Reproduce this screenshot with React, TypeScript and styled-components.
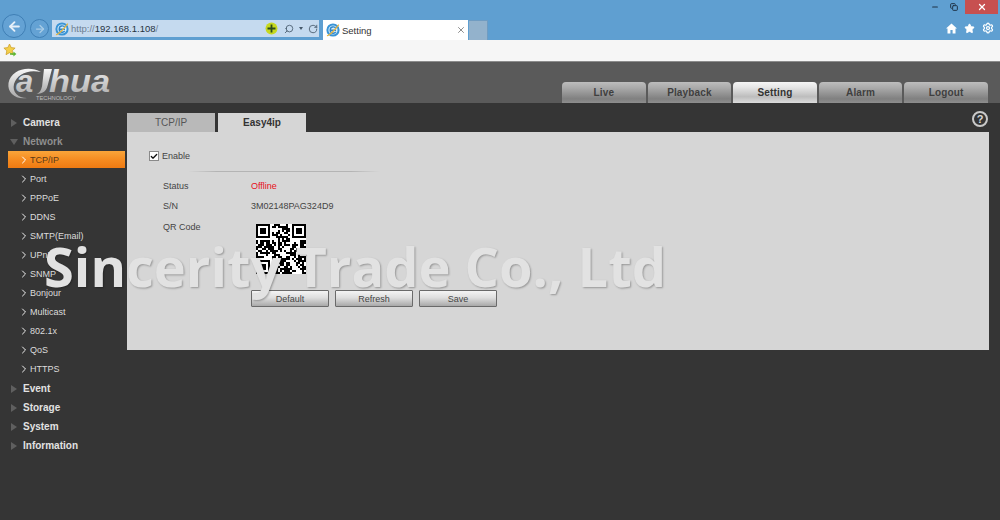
import React, { useMemo } from "react";
import styled, { createGlobalStyle } from "styled-components";
import { ArrowLeft, ArrowRight, Minus, RotateCw, Search, Settings, Star, X, ChevronRight, Check, Copy } from "lucide-react";

const Global = createGlobalStyle`
  html, body { margin: 0; padding: 0; background: #353535; }
  body { font-family: "Liberation Sans", Arial, sans-serif; }
  * { box-sizing: border-box; }
`;

const Page = styled.div`
  position: relative;
  width: 1000px;
  height: 520px;
  overflow: hidden;
  display: flex;
  flex-direction: column;
  background: #353535;
`;

/* browser chrome */
const Chrome = styled.div`
  height: 40px;
  background: #5f9fd1;
  display: flex;
  flex-direction: column;
`;
const Caption = styled.div`
  height: 14px;
  display: flex;
  justify-content: flex-end;
  align-items: center;
  padding-right: 2px;
  color: #1f3347;
`;
const CaptionBtn = styled.div<{ $w: number }>`
  width: ${(p) => p.$w}px;
  height: 14px;
  display: flex;
  align-items: center;
  justify-content: center;
`;
const CloseBtn = styled.div`
  width: 33px;
  height: 14px;
  background: #c75050;
  color: #fff;
  display: flex;
  align-items: center;
  justify-content: center;
`;
const Toolbar = styled.div`
  flex: 1;
  display: flex;
  align-items: flex-end;
  padding-left: 2px;
`;
const NavCircle = styled.div<{ $size: number; $dim?: boolean }>`
  width: ${(p) => p.$size}px;
  height: ${(p) => p.$size}px;
  border-radius: 50%;
  border: 1px solid #3f7fb5;
  background: #64a2d4;
  color: ${(p) => (p.$dim ? "#a9cbe6" : "#e6f0f9")};
  display: flex;
  align-items: center;
  justify-content: center;
  flex: none;
`;
const NavGroup = styled.div`
  display: flex;
  align-items: flex-end;
  gap: 4px;
  height: 24px;
  margin-bottom: 2px;
  width: 50px;
  flex: none;
`;
const Address = styled.div`
  width: 267px;
  height: 17px;
  margin-bottom: 3px;
  background: #c5daef;
  display: flex;
  align-items: center;
  padding: 0 1px 0 3px;
  color: #44586a;
  flex: none;
`;
const Url = styled.span`
  font-size: 9.5px;
  margin-left: 2px;
  color: #6f8091;
  flex: 1;
  b { font-weight: 400; color: #27333f; }
`;
const AddrIcons = styled.div`
  display: flex;
  align-items: center;
  color: #45586a;
`;
const SearchGlyph = styled(Search)`
  transform: scaleX(-1);
  margin-left: 6px;
`;
const Caret = styled.span`
  width: 0;
  height: 0;
  margin-left: 5px;
  border-left: 2.5px solid transparent;
  border-right: 2.5px solid transparent;
  border-top: 3px solid #45586a;
`;
const ReloadGlyph = styled(RotateCw)`
  margin-left: 5px;
`;
const PageTab = styled.div`
  width: 145px;
  height: 20px;
  margin-left: 4px;
  background: #fff;
  display: flex;
  align-items: center;
  padding: 0 2px 0 3px;
  flex: none;
`;
const PageTabTitle = styled.span`
  flex: 1;
  font-size: 9.5px;
  margin-left: 2px;
  color: #333;
`;
const NewTab = styled.div`
  width: 19px;
  height: 20px;
  margin-left: 1px;
  background: #93b2cc;
  border-top: 1px solid #6f9cc2;
  border-right: 1px solid #6f9cc2;
  flex: none;
`;
const RightIcons = styled.div`
  margin-left: auto;
  height: 24px;
  display: flex;
  align-items: center;
  gap: 7px;
  padding-right: 6px;
  color: #fff;
`;
const Favs = styled.div`
  height: 22px;
  background: #f6f6f6;
  display: flex;
  align-items: center;
  padding: 0 0 1px 3px;
  border-bottom: 1px solid #8c8c8c;
`;

/* device header */
const Header = styled.div`
  height: 41px;
  background: #5a5a5a;
  display: flex;
  align-items: flex-end;
  justify-content: space-between;
  padding: 0 12px 0 8px;
`;
const LogoBox = styled.div`
  width: 104px;
  height: 36px;
  align-self: flex-start;
  margin-top: 4px;
`;
const LogoSvg = styled.svg`
  display: block;
  overflow: visible;
`;
const MainTabs = styled.div`
  display: flex;
  gap: 2px;
`;
const MainTab = styled.div<{ $active?: boolean }>`
  width: 83.6px;
  height: 21px;
  border-radius: 4px 4px 0 0;
  display: flex;
  align-items: center;
  justify-content: center;
  font-size: 10px;
  font-weight: 700;
  letter-spacing: 0.15px;
  color: ${(p) => (p.$active ? "#333" : "#3f3f3f")};
  background: ${(p) =>
    p.$active
      ? "linear-gradient(#f6f6f6, #e6e6e6 25%, #bdbdbd 70%, #dcdcdc)"
      : "linear-gradient(#bdbdbd, #a8a8a8 30%, #808080 80%, #8e8e8e)"};
`;

/* body */
const Body = styled.div`
  flex: 1;
  display: flex;
  padding: 10px 11px 0 0;
`;
const Sidebar = styled.nav`
  width: 127px;
  flex: none;
  padding-right: 2px;
`;
const Group = styled.div<{ $dim?: boolean }>`
  height: 19px;
  display: flex;
  align-items: center;
  padding-left: 11px;
  gap: 6px;
  font-size: 10px;
  font-weight: 700;
  color: ${(p) => (p.$dim ? "#8f8f8f" : "#e2e2e2")};
`;
const Tri = styled.span<{ $open?: boolean }>`
  width: 0;
  height: 0;
  flex: none;
  ${(p) =>
    p.$open
      ? `border-left: 4px solid transparent; border-right: 4px solid transparent; border-top: 6px solid #5f5f5f; margin-left: -1px; margin-right: -1px;`
      : `border-top: 4px solid transparent; border-bottom: 4px solid transparent; border-left: 6px solid #5f5f5f;`}
`;
const Item = styled.div<{ $active?: boolean }>`
  height: ${(p) => (p.$active ? 17 : 19)}px;
  margin-bottom: ${(p) => (p.$active ? 2 : 0)}px;
  padding-bottom: ${(p) => (p.$active ? 0 : 1)}px;
  margin-left: 8px;
  width: 117px;
  display: flex;
  align-items: center;
  padding-left: 10px;
  font-size: 9px;
  color: ${(p) => (p.$active ? "#5a3a18" : "#dcdcdc")};
  background: ${(p) => (p.$active ? "linear-gradient(#f9a53a, #f58a1f 55%, #ee7a12)" : "none")};
  svg { color: ${(p) => (p.$active ? "#fff" : "#f0f0f0")}; flex: none; }
`;

const Main = styled.main`
  flex: 1;
  display: flex;
  flex-direction: column;
`;
const SubBar = styled.div`
  height: 19px;
  display: flex;
  gap: 3px;
`;
const SubTab = styled.div<{ $active?: boolean }>`
  width: 88px;
  height: 19px;
  display: flex;
  align-items: center;
  justify-content: center;
  font-size: 10px;
  font-weight: ${(p) => (p.$active ? 700 : 400)};
  color: ${(p) => (p.$active ? "#333" : "#555")};
  background: ${(p) => (p.$active ? "#d6d6d6" : "#b9b9b9")};
`;
const Help = styled.div`
  margin-left: auto;
  margin-right: 1px;
  margin-top: -2px;
  width: 16px;
  height: 16px;
  border-radius: 50%;
  border: 2px solid #c9c9c9;
  color: #d8d8d8;
  font-size: 11px;
  font-weight: 700;
  display: flex;
  align-items: center;
  justify-content: center;
`;
const Panel = styled.section`
  height: 218px;
  background: #d6d6d6;
  padding-top: 19px;
  color: #444;
  font-size: 9px;
`;
const EnableRow = styled.label`
  height: 10px;
  margin-left: 22px;
  display: flex;
  align-items: center;
  gap: 3px;
`;
const Box = styled.span`
  width: 10px;
  height: 10px;
  background: #fff;
  border: 1px solid #8a8a8a;
  color: #111;
  display: flex;
  align-items: center;
  justify-content: center;
`;
const Divider = styled.div`
  height: 1px;
  width: 192px;
  margin: 10px 0 4px 61px;
  background: linear-gradient(90deg, #d6d6d6, #b4b4b4 15%, #b4b4b4 85%, #d6d6d6);
`;
const Field = styled.div`
  height: 20px;
  margin-left: 36px;
  display: flex;
  align-items: center;
`;
const Label = styled.span`
  width: 88px;
  flex: none;
`;
const Offline = styled.span`
  color: #e60f1a;
`;
const QrRow = styled.div`
  margin-left: 36px;
  margin-top: 1px;
  display: flex;
  align-items: flex-start;
`;
const QrLabel = styled(Label)`
  line-height: 20px;
`;
const QrWrap = styled.div`
  margin: 7px 0 0 5px;
  width: 50px;
  height: 50px;
  background: #fff;
`;
const Buttons = styled.div`
  margin: 16px 0 0 124px;
  display: flex;
  gap: 6px;
`;
const Btn = styled.button`
  width: 78px;
  height: 17px;
  padding: 0;
  border: 1px solid #6a6a6a;
  border-radius: 1px;
  background: linear-gradient(#f4f4f4, #dedede 45%, #a9a9a9);
  font-family: inherit;
  font-size: 9px;
  color: #444;
`;
const Watermark = styled.div`
  position: absolute;
  left: 44px;
  top: 231px;
  font-family: "Open Sans", sans-serif;
  font-weight: 700;
  font-size: 54.2px;
  line-height: 70px;
  white-space: nowrap;
  color: #e2e2e2;
  text-shadow: 1px 1px 2px rgba(0, 0, 0, 0.3);
  pointer-events: none;
`;

const IeIcon = () => (
  <svg width="14" height="14" viewBox="0 0 14 14">
    <circle cx="7" cy="7" r="5.6" fill="#d9eefb" stroke="#3a94d6" strokeWidth="2" />
    <path d="M4 7.3h6M9.8 5.4A3 3 0 0 0 4.2 7a3 3 0 0 0 5.5 1.8" fill="none" stroke="#2f86c9" strokeWidth="1.4" />
    <path d="M1 12.5C3 13 9 7 12.8 1.6" fill="none" stroke="#e5b440" strokeWidth="1.2" />
  </svg>
);
const GuardIcon = () => (
  <svg width="13" height="13" viewBox="0 0 13 13">
    <circle cx="6.5" cy="6.5" r="6" fill="#c6d81f" />
    <path d="M6.5 2.5v8M2.5 6.5h8" stroke="#2c4b1c" strokeWidth="1.8" />
  </svg>
);
const FavIcon = () => (
  <svg width="14" height="14" viewBox="0 0 14 14">
    <path d="M6.5 1l1.7 3.6 3.9.5-2.9 2.7.8 3.9-3.5-2-3.5 2 .8-3.9L.9 5.1l3.9-.5z" fill="#f4cf4a" stroke="#c99a20" strokeWidth=".7" />
    <path d="M7 10.3h3.4V8.6L13.4 11l-3 2.4v-1.6H7z" fill="#5cb531" />
  </svg>
);
const HomeIcon = () => (
  <svg width="11" height="11" viewBox="0 0 11 11" fill="#fff">
    <path fillRule="evenodd" d="M5.5.5L11 5.6H9.5V10.5H6.6V7H4.4V10.5H1.5V5.6H0z" />
  </svg>
);
const Logo = () => (
  <LogoSvg width="104" height="36" viewBox="0 0 104 36">
    <defs>
      <linearGradient id="lg" x1="0" y1="0" x2="0" y2="1">
        <stop offset="0" stopColor="#f7f7f7" />
        <stop offset="1" stopColor="#a8a8a8" />
      </linearGradient>
    </defs>
    <path d="M33 6C20 -1 3 4 .5 17-1 27 8 34 19 32 10 32 4 26 6 18 9 8 20 3 33 6z" fill="url(#lg)" />
    <text x="8" y="26" fontFamily="'Liberation Sans'" fontWeight="700" fontStyle="italic" fontSize="31" fill="url(#lg)">a</text>
    <path d="M36 3h8l-4.5 17c-1.3 5-4 7.5-11 8 3.5-1.5 4.5-3.5 5.6-8z" fill="url(#lg)" />
    <text x="41" y="26" fontFamily="'Liberation Sans'" fontWeight="700" fontStyle="italic" fontSize="32" textLength="61" lengthAdjust="spacingAndGlyphs" fill="url(#lg)">hua</text>
    <text x="28" y="33.5" fontFamily="'Liberation Sans'" fontSize="6" textLength="40" lengthAdjust="spacingAndGlyphs" fill="#bdbdbd">TECHNOLOGY</text>
  </LogoSvg>
);

const QR = () => {
  const cells = useMemo(() => {
    const n = 25;
    const out: [number, number][] = [];
    let s = 20148;
    const rnd = () => {
      s = (s * 1103515245 + 12345) & 0x7fffffff;
      return (s >> 12) % 100;
    };
    const finder = (x: number, y: number, ox: number, oy: number) => {
      const dx = x - ox;
      const dy = y - oy;
      if (dx < -1 || dy < -1 || dx > 7 || dy > 7) return null;
      if (dx < 0 || dy < 0 || dx > 6 || dy > 6) return false;
      const edge = dx === 0 || dy === 0 || dx === 6 || dy === 6;
      const core = dx >= 2 && dx <= 4 && dy >= 2 && dy <= 4;
      return edge || core;
    };
    for (let y = 0; y < n; y++) {
      for (let x = 0; x < n; x++) {
        const f = finder(x, y, 0, 0) ?? finder(x, y, 18, 0) ?? finder(x, y, 0, 18);
        const on = f === null ? rnd() < 55 : f;
        if (on) out.push([x, y]);
      }
    }
    return out;
  }, []);
  return (
    <svg width="50" height="50" viewBox="0 0 25 25" shapeRendering="crispEdges">
      {cells.map(([x, y]) => (
        <rect key={`${x}-${y}`} x={x} y={y} width="1" height="1" fill="#000" />
      ))}
    </svg>
  );
};

const subItems = ["TCP/IP", "Port", "PPPoE", "DDNS", "SMTP(Email)", "UPnP", "SNMP", "Bonjour", "Multicast", "802.1x", "QoS", "HTTPS"];
const mainTabs = ["Live", "Playback", "Setting", "Alarm", "Logout"];

export default function App() {
  return (
    <Page>
      <Global />
      <Chrome>
        <Caption>
          <CaptionBtn $w={17}><Minus size={8} strokeWidth={3.5} /></CaptionBtn>
          <CaptionBtn $w={22}><Copy size={8} strokeWidth={3} /></CaptionBtn>
          <CloseBtn><X size={10} strokeWidth={3} /></CloseBtn>
        </Caption>
        <Toolbar>
          <NavGroup>
            <NavCircle $size={24}><ArrowLeft size={15} strokeWidth={3} /></NavCircle>
            <NavCircle $size={19} $dim><ArrowRight size={12} strokeWidth={2.5} /></NavCircle>
          </NavGroup>
          <Address>
            <IeIcon />
            <Url>http://<b>192.168.1.108</b>/</Url>
            <AddrIcons>
              <GuardIcon />
              <SearchGlyph size={10} strokeWidth={2} />
              <Caret />
              <ReloadGlyph size={10} strokeWidth={2} />
            </AddrIcons>
          </Address>
          <PageTab>
            <IeIcon />
            <PageTabTitle>Setting</PageTabTitle>
            <X size={10} color="#777" strokeWidth={2} />
          </PageTab>
          <NewTab />
          <RightIcons>
            <HomeIcon />
            <Star size={11} fill="#fff" />
            <Settings size={12} strokeWidth={2.5} />
          </RightIcons>
        </Toolbar>
      </Chrome>
      <Favs><FavIcon /></Favs>
      <Header>
        <LogoBox><Logo /></LogoBox>
        <MainTabs>
          {mainTabs.map((t) => (
            <MainTab key={t} $active={t === "Setting"}>{t}</MainTab>
          ))}
        </MainTabs>
      </Header>
      <Body>
        <Sidebar>
          <Group><Tri />Camera</Group>
          <Group $dim><Tri $open />Network</Group>
          {subItems.map((s, i) => (
            <Item key={s} $active={i === 0}>
              <ChevronRight size={12} strokeWidth={2} />
              {s}
            </Item>
          ))}
          {["Event", "Storage", "System", "Information"].map((g) => (
            <Group key={g}><Tri />{g}</Group>
          ))}
        </Sidebar>
        <Main>
          <SubBar>
            <SubTab>TCP/IP</SubTab>
            <SubTab $active>Easy4ip</SubTab>
            <Help>?</Help>
          </SubBar>
          <Panel>
            <EnableRow>
              <Box><Check size={9} strokeWidth={4} /></Box>
              Enable
            </EnableRow>
            <Divider />
            <Field><Label>Status</Label><Offline>Offline</Offline></Field>
            <Field><Label>S/N</Label>3M02148PAG324D9</Field>
            <QrRow>
              <QrLabel>QR Code</QrLabel>
              <QrWrap><QR /></QrWrap>
            </QrRow>
            <Buttons>
              <Btn>Default</Btn>
              <Btn>Refresh</Btn>
              <Btn>Save</Btn>
            </Buttons>
          </Panel>
        </Main>
      </Body>
      <Watermark>Sincerity Trade Co., Ltd</Watermark>
    </Page>
  );
}
